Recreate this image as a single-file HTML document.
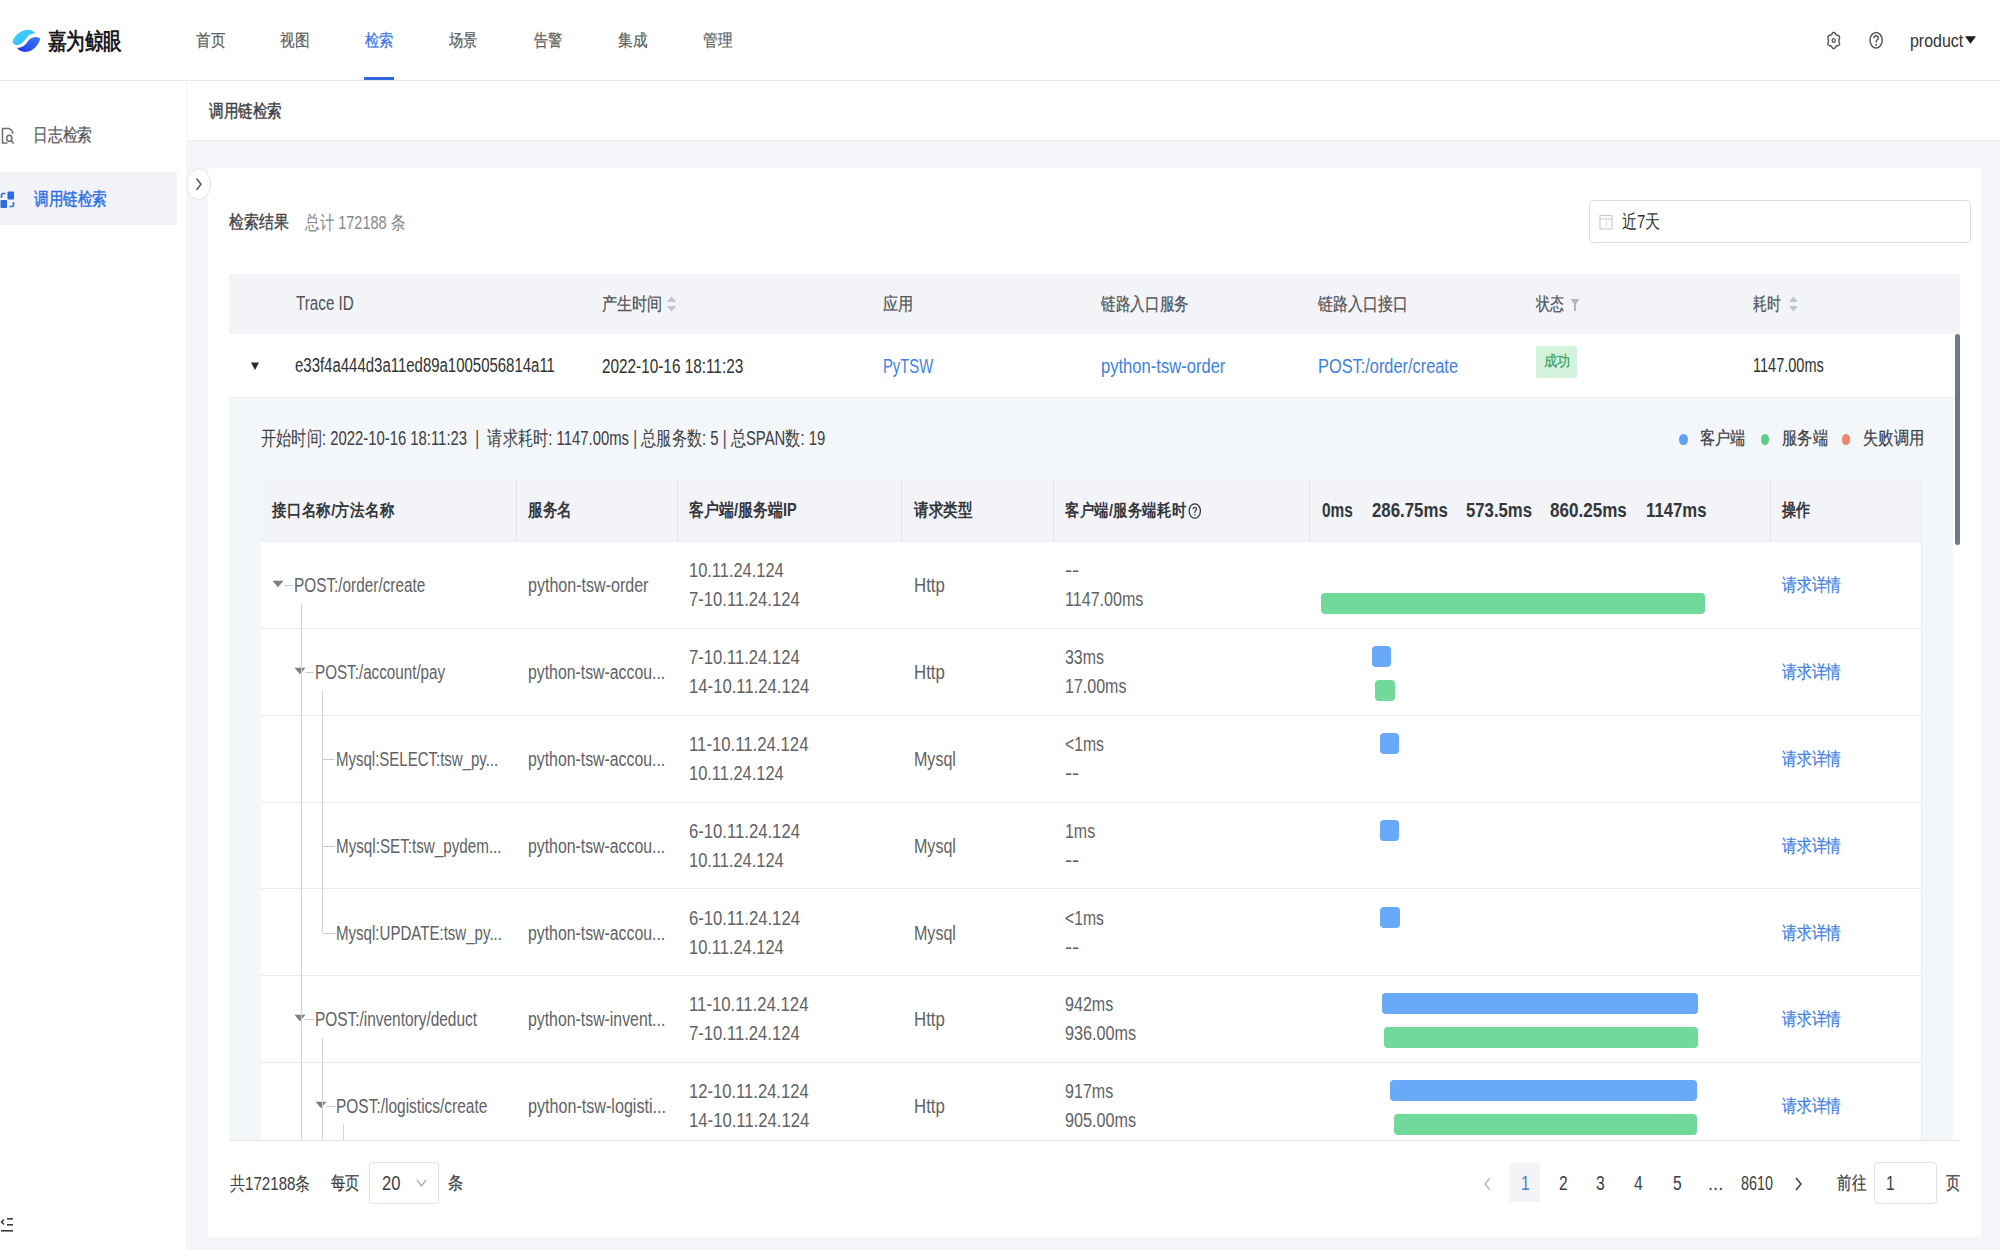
<!DOCTYPE html>
<html><head><meta charset="utf-8"><title>调用链检索</title>
<style>
html,body{margin:0;padding:0}
body{width:2000px;height:1250px;overflow:hidden;position:relative;font-family:"Liberation Sans",sans-serif;background:#f3f5f9}
.r{position:absolute}
.t{position:absolute;white-space:nowrap;transform-origin:0 50%;line-height:1}
</style></head><body>
<div class="r" style="left:0px;top:0px;width:2000px;height:1250px;background:#f3f5f9;"></div>
<div class="r" style="left:0px;top:0px;width:2000px;height:80px;background:#ffffff;"></div>
<div class="r" style="left:0px;top:80px;width:2000px;height:1px;background:#e7e9ed;"></div>
<svg class="r" style="left:10px;top:28px" width="32" height="26" viewBox="0 0 32 26">
<defs><linearGradient id="lgc" x1="0" y1="0" x2="1" y2="1"><stop offset="0" stop-color="#49d8f4"/><stop offset="1" stop-color="#30b2f9"/></linearGradient>
<linearGradient id="lgb" x1="1" y1="0" x2="0" y2="1"><stop offset="0" stop-color="#3c7ef3"/><stop offset="1" stop-color="#1f36f3"/></linearGradient></defs>
<path d="M2.4 14.2 C4 8 10 2 18 1.8 C21 1.8 23.5 3 25.5 5.5 C22 5.2 19.5 6.3 17.3 8.8 C15.3 11.8 13 15.3 8 17.2 C6 17.5 3.8 16 2.4 14.2 Z" fill="url(#lgc)"/>
<path d="M30.4 11 C28 18 22 24 15 24 C11.5 24 8.5 22 6.8 19.8 C12 20.2 15.2 17.3 17.2 14.3 C19.2 11.3 21 9.5 24.5 9.2 C26.5 8.5 28.8 9.5 30.4 11 Z" fill="url(#lgb)"/>
</svg>
<div class="t" style="left:48px;top:28.5px;font-size:24px;color:#1b1b1f;font-weight:700;transform:scale(0.7708,0.95);">嘉为鲸眼</div>
<div class="t" style="left:196.2px;top:30.8px;font-size:18px;color:#5c5f66;font-weight:400;transform:scale(0.8176,0.95);-webkit-text-stroke:0.25px currentColor;">首页</div>
<div class="t" style="left:280px;top:30.8px;font-size:18px;color:#5c5f66;font-weight:400;transform:scale(0.8176,0.95);-webkit-text-stroke:0.25px currentColor;">视图</div>
<div class="t" style="left:364.5px;top:30.8px;font-size:18px;color:#3c76e4;font-weight:400;transform:scale(0.7943,0.95);-webkit-text-stroke:0.25px currentColor;">检索</div>
<div class="t" style="left:449px;top:30.8px;font-size:18px;color:#5c5f66;font-weight:400;transform:scale(0.7943,0.95);-webkit-text-stroke:0.25px currentColor;">场景</div>
<div class="t" style="left:534px;top:30.8px;font-size:18px;color:#5c5f66;font-weight:400;transform:scale(0.7943,0.95);-webkit-text-stroke:0.25px currentColor;">告警</div>
<div class="t" style="left:618px;top:30.8px;font-size:18px;color:#5c5f66;font-weight:400;transform:scale(0.8176,0.95);-webkit-text-stroke:0.25px currentColor;">集成</div>
<div class="t" style="left:702.7px;top:30.8px;font-size:18px;color:#5c5f66;font-weight:400;transform:scale(0.8176,0.95);-webkit-text-stroke:0.25px currentColor;">管理</div>
<div class="r" style="left:364px;top:77px;width:30px;height:3px;background:#2f66dc;"></div>
<svg class="r" style="left:1827px;top:31px" width="14" height="19" viewBox="0 0 14 19">
<path d="M6.70 1.35 L7.04 1.40 L7.37 1.56 L7.68 1.80 L7.96 2.10 L8.21 2.45 L8.44 2.81 L8.65 3.15 L8.85 3.46 L9.06 3.72 L9.28 3.91 L9.53 4.06 L9.81 4.15 L10.12 4.22 L10.47 4.27 L10.83 4.34 L11.20 4.44 L11.55 4.59 L11.87 4.80 L12.14 5.08 L12.35 5.42 L12.48 5.82 L12.54 6.25 L12.53 6.70 L12.45 7.16 L12.34 7.61 L12.21 8.04 L12.07 8.44 L11.96 8.81 L11.89 9.16 L11.86 9.50 L11.89 9.84 L11.96 10.19 L12.07 10.56 L12.21 10.96 L12.34 11.39 L12.45 11.84 L12.53 12.30 L12.54 12.75 L12.48 13.18 L12.35 13.57 L12.14 13.92 L11.87 14.20 L11.55 14.41 L11.20 14.56 L10.83 14.66 L10.47 14.73 L10.12 14.78 L9.81 14.85 L9.53 14.94 L9.28 15.09 L9.06 15.28 L8.85 15.54 L8.65 15.85 L8.44 16.19 L8.21 16.55 L7.96 16.90 L7.68 17.20 L7.37 17.44 L7.04 17.60 L6.70 17.65 L6.36 17.60 L6.03 17.44 L5.72 17.20 L5.44 16.90 L5.19 16.55 L4.96 16.19 L4.75 15.85 L4.55 15.54 L4.34 15.28 L4.12 15.09 L3.87 14.94 L3.59 14.85 L3.28 14.78 L2.93 14.73 L2.57 14.66 L2.20 14.56 L1.85 14.41 L1.53 14.20 L1.26 13.92 L1.05 13.58 L0.92 13.18 L0.86 12.75 L0.87 12.30 L0.95 11.84 L1.06 11.39 L1.19 10.96 L1.33 10.56 L1.44 10.19 L1.51 9.84 L1.54 9.50 L1.51 9.16 L1.44 8.81 L1.33 8.44 L1.19 8.04 L1.06 7.61 L0.95 7.16 L0.87 6.70 L0.86 6.25 L0.92 5.82 L1.05 5.42 L1.26 5.08 L1.53 4.80 L1.85 4.59 L2.20 4.44 L2.57 4.34 L2.93 4.27 L3.28 4.22 L3.59 4.15 L3.87 4.06 L4.12 3.91 L4.34 3.72 L4.55 3.46 L4.75 3.15 L4.96 2.81 L5.19 2.45 L5.44 2.10 L5.72 1.80 L6.03 1.56 L6.36 1.40 L6.70 1.35 Z" fill="none" stroke="#55585e" stroke-width="1.5" stroke-linejoin="round"/>
<ellipse cx="6.7" cy="9.5" rx="1.5" ry="1.9" fill="none" stroke="#55585e" stroke-width="1.4"/></svg>
<svg class="r" style="left:1868px;top:30px" width="17" height="21" viewBox="0 0 17 21">
<ellipse cx="8.1" cy="10.3" rx="6.1" ry="7.8" fill="none" stroke="#55585e" stroke-width="1.5"/>
<path d="M6 8.3 C6 6.6 6.9 5.8 8.1 5.8 C9.3 5.8 10.2 6.6 10.2 7.9 C10.2 9.6 8.2 9.9 8.2 11.8 L8.2 12.6" fill="none" stroke="#55585e" stroke-width="1.5"/>
<rect x="7.4" y="13.9" width="1.6" height="1.8" fill="#55585e"/></svg>
<div class="t" style="left:1910px;top:30.8px;font-size:19px;color:#303236;font-weight:400;transform:scaleX(0.8387);">product</div>
<svg class="r" style="left:1964px;top:35px" width="13" height="10" viewBox="0 0 13 10"><path d="M1 1.2 L12 1.2 L6.5 8.8 Z" fill="#1d1d20"/></svg>
<div class="r" style="left:0px;top:81px;width:186px;height:1169px;background:#ffffff;"></div>
<div class="r" style="left:186px;top:81px;width:5px;height:1169px;background:linear-gradient(90deg,#f4f5f7,#f3f5f9);"></div>
<svg class="r" style="left:0px;top:126px" width="16" height="19" viewBox="0 0 16 19">
<path d="M9.5 2.5 L2.5 2.5 L2.5 17 L7.5 17" fill="none" stroke="#6a6d73" stroke-width="1.5"/>
<path d="M9.5 2.5 L12.5 5.5 L12.5 8" fill="none" stroke="#6a6d73" stroke-width="1.5"/>
<ellipse cx="9.3" cy="12.3" rx="2.6" ry="3.1" fill="none" stroke="#6a6d73" stroke-width="1.5"/>
<path d="M11.3 14.8 L13.6 17.6" stroke="#6a6d73" stroke-width="1.6"/></svg>
<div class="t" style="left:32.6px;top:125.5px;font-size:18.5px;color:#55585e;font-weight:400;transform:scale(0.7764,0.95);-webkit-text-stroke:0.25px currentColor;">日志检索</div>
<div class="r" style="left:0px;top:172px;width:177px;height:53px;background:#f1f3f7;"></div>
<svg class="r" style="left:0px;top:190px" width="16" height="19" viewBox="0 0 16 19">
<rect x="7.5" y="1.5" width="6.5" height="8" rx="1" fill="#2f6be6"/>
<rect x="0.5" y="10" width="6.5" height="8" rx="1" fill="#2f6be6"/>
<path d="M1.5 8 L1.5 5 C1.5 4 2 3.5 3 3.5 L5.5 3.5" fill="none" stroke="#2f6be6" stroke-width="1.6"/>
<path d="M13.5 12 L13.5 15 C13.5 16 13 16.5 12 16.5 L9.5 16.5" fill="none" stroke="#2f6be6" stroke-width="1.6"/></svg>
<div class="t" style="left:33.7px;top:190.0px;font-size:18.5px;color:#2d6de8;font-weight:500;transform:scale(0.7660,0.95);-webkit-text-stroke:0.45px currentColor;">调用链检索</div>
<svg class="r" style="left:0px;top:1215px" width="16" height="19" viewBox="0 0 16 19">
<path d="M4 4.5 L1.5 7 L4 9.5" fill="none" stroke="#3a3d42" stroke-width="1.5"/>
<rect x="7" y="3" width="6" height="1.6" fill="#3a3d42"/>
<rect x="7" y="9" width="6" height="1.6" fill="#3a3d42"/>
<rect x="1" y="15" width="12" height="1.6" fill="#3a3d42"/></svg>
<div class="r" style="left:187px;top:81px;width:1813px;height:59px;background:#ffffff;"></div>
<div class="r" style="left:187px;top:140px;width:1813px;height:1px;background:#eaebee;"></div>
<div class="t" style="left:208.5px;top:101.7px;font-size:18.5px;color:#3d4046;font-weight:500;transform:scale(0.7660,0.95);-webkit-text-stroke:0.45px currentColor;">调用链检索</div>
<div class="r" style="left:208px;top:168px;width:1773px;height:1069px;background:#ffffff;"></div>
<svg class="r" style="left:186px;top:168px" width="26" height="33" viewBox="0 0 26 33">
<ellipse cx="12.7" cy="16.2" rx="11.8" ry="15.4" fill="#fff" stroke="#e3e5ea" stroke-width="1"/>
<path d="M10.5 10.5 L15 16.2 L10.5 22" fill="none" stroke="#5d6066" stroke-width="1.6"/></svg>
<div class="t" style="left:229px;top:212.8px;font-size:18.5px;color:#45484d;font-weight:400;transform:scale(0.7827,0.95);-webkit-text-stroke:0.45px currentColor;">检索结果</div>
<div class="t" style="left:304.5px;top:212.5px;font-size:19px;color:#85888e;font-weight:400;transform:scaleX(0.7654);">总计 172188 条</div>
<div class="r" style="left:1589px;top:200px;width:382px;height:43px;background:#ffffff;box-sizing:border-box;border:1px solid #d9dce2;border-radius:4px;"></div>
<svg class="r" style="left:1599px;top:214px" width="14" height="16" viewBox="0 0 14 16">
<rect x="1" y="1.5" width="12" height="13.5" fill="none" stroke="#c3c6cc" stroke-width="1"/>
<path d="M1 5 L13 5" stroke="#c3c6cc" stroke-width="1"/>
<path d="M6 8 L8 8 L7 12" fill="none" stroke="#d3d6dc" stroke-width="0.8"/></svg>
<div class="t" style="left:1622px;top:212.1px;font-size:19px;color:#2f3236;font-weight:400;transform:scaleX(0.7872);">近7天</div>
<div class="r" style="left:229px;top:274px;width:1731px;height:60px;background:#f2f4f8;"></div>
<div class="t" style="left:296px;top:294.2px;font-size:19.5px;color:#505359;font-weight:400;transform:scaleX(0.7808);">Trace ID</div>
<div class="t" style="left:601.8px;top:295.4px;font-size:18.5px;color:#505359;font-weight:400;transform:scale(0.7973,0.95);-webkit-text-stroke:0.25px currentColor;">产生时间</div>
<svg class="r" style="left:666px;top:296px" width="11" height="16" viewBox="0 0 11 16"><path d="M5.5 0.5 L10 6 L1 6 Z" fill="#c0c3ca"/><path d="M5.5 15.5 L10 10 L1 10 Z" fill="#c0c3ca"/></svg>
<div class="t" style="left:883px;top:295.4px;font-size:18.5px;color:#505359;font-weight:400;transform:scale(0.8000,0.95);-webkit-text-stroke:0.25px currentColor;">应用</div>
<div class="t" style="left:1101px;top:295.4px;font-size:18.5px;color:#505359;font-weight:400;transform:scale(0.7699,0.95);-webkit-text-stroke:0.25px currentColor;">链路入口服务</div>
<div class="t" style="left:1317.6px;top:295.4px;font-size:18.5px;color:#505359;font-weight:400;transform:scale(0.7874,0.95);-webkit-text-stroke:0.25px currentColor;">链路入口接口</div>
<div class="t" style="left:1535.8px;top:295.4px;font-size:18.5px;color:#505359;font-weight:400;transform:scale(0.7351,0.95);-webkit-text-stroke:0.25px currentColor;">状态</div>
<svg class="r" style="left:1570px;top:298px" width="10" height="14" viewBox="0 0 10 14"><path d="M0.5 1 L9.5 1 L6 6 L6 13 L4 13 L4 6 Z" fill="#b4b7be"/></svg>
<div class="t" style="left:1753px;top:295.4px;font-size:18.5px;color:#505359;font-weight:400;transform:scale(0.7289,0.95);-webkit-text-stroke:0.25px currentColor;">耗时</div>
<svg class="r" style="left:1788px;top:296px" width="11" height="16" viewBox="0 0 11 16"><path d="M5.5 0.5 L10 6 L1 6 Z" fill="#c0c3ca"/><path d="M5.5 15.5 L10 10 L1 10 Z" fill="#c0c3ca"/></svg>
<div class="r" style="left:229px;top:334px;width:1726px;height:63px;background:#ffffff;"></div>
<div class="r" style="left:229px;top:397px;width:1726px;height:1px;background:#ebebeb;"></div>
<svg class="r" style="left:250px;top:361px" width="10" height="10" viewBox="0 0 10 10"><path d="M1 1.5 L9 1.5 L5 9 Z" fill="#2b2d31"/></svg>
<div class="t" style="left:295.2px;top:355.9px;font-size:19.5px;color:#2f3236;font-weight:400;transform:scaleX(0.7674);">e33f4a444d3a11ed89a1005056814a11</div>
<div class="t" style="left:602px;top:355.7px;font-size:20px;color:#2f3236;font-weight:400;transform:scaleX(0.7665);">2022-10-16 18:11:23</div>
<div class="t" style="left:883px;top:355.7px;font-size:20px;color:#3f7fe6;font-weight:400;transform:scaleX(0.7394);">PyTSW</div>
<div class="t" style="left:1101px;top:355.7px;font-size:20px;color:#3f7fe6;font-weight:400;transform:scaleX(0.8289);">python-tsw-order</div>
<div class="t" style="left:1317.6px;top:355.7px;font-size:20px;color:#3f7fe6;font-weight:400;transform:scaleX(0.8179);">POST:/order/create</div>
<div class="r" style="left:1536px;top:346px;width:41px;height:32px;background:#d3f3dc;border-radius:2px;"></div>
<div class="t" style="left:1544px;top:353.2px;font-size:16px;color:#3a9f5a;font-weight:400;transform:scale(0.8333,0.95);-webkit-text-stroke:0.25px currentColor;">成功</div>
<div class="t" style="left:1753.2px;top:356.0px;font-size:19.4px;color:#2f3236;font-weight:400;transform:scaleX(0.7484);">1147.00ms</div>
<div class="r" style="left:229px;top:398px;width:1724px;height:743px;background:#f4f7fa;"></div>
<div class="r" style="left:1955px;top:334px;width:5px;height:211px;background:#6a7a8c;border-radius:3px;"></div>
<div class="t" style="left:261px;top:428.6px;font-size:19.5px;color:#3d4046;font-weight:400;transform:scaleX(0.7618);">开始时间: 2022-10-16 18:11:23 &nbsp;|&nbsp; 请求耗时: 1147.00ms | 总服务数: 5 | 总SPAN数: 19</div>
<div class="r" style="left:1679px;top:433.5px;width:8.5px;height:11px;border-radius:50%;background:#5fa2f5"></div>
<div class="t" style="left:1700px;top:429.1px;font-size:18.5px;color:#3d4046;font-weight:400;transform:scale(0.8000,0.95);-webkit-text-stroke:0.25px currentColor;">客户端</div>
<div class="r" style="left:1761px;top:433.5px;width:7.5px;height:11px;border-radius:50%;background:#5bd08a"></div>
<div class="t" style="left:1781.6px;top:429.1px;font-size:18.5px;color:#3d4046;font-weight:400;transform:scale(0.8036,0.95);-webkit-text-stroke:0.25px currentColor;">服务端</div>
<div class="r" style="left:1842px;top:433.5px;width:7.5px;height:11px;border-radius:50%;background:#f0846d"></div>
<div class="t" style="left:1863px;top:429.1px;font-size:18.5px;color:#3d4046;font-weight:400;transform:scale(0.8055,0.95);-webkit-text-stroke:0.25px currentColor;">失败调用</div>
<div class="r" style="left:261px;top:479px;width:1661px;height:662px;background:#ffffff;"></div>
<div class="r" style="left:261px;top:479px;width:1661px;height:62px;background:#f2f4f8;"></div>
<div class="r" style="left:261px;top:541px;width:1661px;height:1px;background:#ebebef;"></div>
<div class="r" style="left:516px;top:479px;width:1px;height:62px;background:#e3e5e9;"></div>
<div class="r" style="left:677px;top:479px;width:1px;height:62px;background:#e3e5e9;"></div>
<div class="r" style="left:901px;top:479px;width:1px;height:62px;background:#e3e5e9;"></div>
<div class="r" style="left:1053px;top:479px;width:1px;height:62px;background:#e3e5e9;"></div>
<div class="r" style="left:1309px;top:479px;width:1px;height:62px;background:#e3e5e9;"></div>
<div class="r" style="left:1770px;top:479px;width:1px;height:62px;background:#e3e5e9;"></div>
<div class="r" style="left:1921px;top:479px;width:1px;height:662px;background:#e9ebef;"></div>
<div class="t" style="left:272px;top:501.1px;font-size:18.5px;color:#34373c;font-weight:700;transform:scale(0.7796,0.92);">接口名称/方法名称</div>
<div class="t" style="left:527.9px;top:501.1px;font-size:18.5px;color:#34373c;font-weight:700;transform:scale(0.7704,0.95);">服务名</div>
<div class="t" style="left:688.8px;top:501.1px;font-size:18.5px;color:#34373c;font-weight:700;transform:scale(0.7882,0.95);">客户端/服务端IP</div>
<div class="t" style="left:913.6px;top:501.1px;font-size:18.5px;color:#34373c;font-weight:700;transform:scale(0.7684,0.95);">请求类型</div>
<div class="t" style="left:1064.8px;top:501.1px;font-size:18.5px;color:#34373c;font-weight:700;transform:scale(0.7720,0.92);">客户端/服务端耗时</div>
<svg class="r" style="left:1188px;top:502px" width="14" height="18" viewBox="0 0 14 18"><ellipse cx="6.8" cy="9" rx="5.6" ry="7.2" fill="none" stroke="#34373c" stroke-width="1.3"/><path d="M5 7.3 C5 6 5.8 5.3 6.8 5.3 C7.8 5.3 8.6 6 8.6 7 C8.6 8.3 6.9 8.6 6.9 10.2 L6.9 10.9" fill="none" stroke="#34373c" stroke-width="1.2"/><rect x="6.3" y="12" width="1.2" height="1.4" fill="#34373c"/></svg>
<div class="t" style="left:1321.8px;top:500.6px;font-size:19.5px;color:#34373c;font-weight:700;transform:scaleX(0.7895);">0ms</div>
<div class="t" style="left:1372px;top:500.6px;font-size:19.5px;color:#34373c;font-weight:700;transform:scaleX(0.8628);">286.75ms</div>
<div class="t" style="left:1465.8px;top:500.6px;font-size:19.5px;color:#34373c;font-weight:700;transform:scaleX(0.8579);">573.5ms</div>
<div class="t" style="left:1550.2px;top:500.6px;font-size:19.5px;color:#34373c;font-weight:700;transform:scaleX(0.8744);">860.25ms</div>
<div class="t" style="left:1645.6px;top:500.6px;font-size:19.5px;color:#34373c;font-weight:700;transform:scaleX(0.8580);">1147ms</div>
<div class="t" style="left:1781.6px;top:501.1px;font-size:18.5px;color:#34373c;font-weight:700;transform:scale(0.7421,0.95);">操作</div>
<div class="r" style="left:261px;top:628px;width:1660px;height:1px;background:#ebebeb;"></div>
<svg class="r" style="left:272.3px;top:579.5px" width="12" height="8" viewBox="0 0 12 8"><path d="M0.5 0.8 L11.5 0.8 L6 7.2 Z" fill="#7b7e84"/></svg>
<div class="r" style="left:283.8px;top:585.0px;width:9.0px;height:1px;background:#c9cacd"></div>
<div class="t" style="left:293.8px;top:575.8px;font-size:19.5px;color:#5f6268;font-weight:400;transform:scaleX(0.7867);">POST:/order/create</div>
<div class="t" style="left:527.6px;top:575.8px;font-size:19.5px;color:#5f6268;font-weight:400;transform:scaleX(0.8234);">python-tsw-order</div>
<div class="t" style="left:689.3px;top:560.6px;font-size:19.5px;color:#5f6268;font-weight:400;transform:scaleX(0.8423);">10.11.24.124</div>
<div class="t" style="left:689.3px;top:590.2px;font-size:19.5px;color:#5f6268;font-weight:400;transform:scaleX(0.8527);">7-10.11.24.124</div>
<div class="t" style="left:913.8px;top:575.8px;font-size:19.5px;color:#5f6268;font-weight:400;transform:scaleX(0.8618);">Http</div>
<div class="t" style="left:1065px;top:560.6px;font-size:19.5px;color:#5f6268;font-weight:400;transform:scaleX(1.0909);">--</div>
<div class="t" style="left:1065px;top:590.2px;font-size:19.5px;color:#5f6268;font-weight:400;transform:scaleX(0.8245);">1147.00ms</div>
<div class="r" style="left:1321px;top:593px;width:384px;height:21px;background:#71d99a;border-radius:4px;"></div>
<div class="t" style="left:1781.6px;top:576.2px;font-size:18.5px;color:#3f7fe6;font-weight:400;transform:scale(0.7787,0.95);-webkit-text-stroke:0.25px currentColor;">请求详情</div>
<div class="r" style="left:261px;top:715px;width:1660px;height:1px;background:#ebebeb;"></div>
<svg class="r" style="left:293.5px;top:666.5px" width="12" height="8" viewBox="0 0 12 8"><path d="M0.5 0.8 L11.5 0.8 L6 7.2 Z" fill="#7b7e84"/></svg>
<div class="r" style="left:305px;top:672.0px;width:9px;height:1px;background:#c9cacd"></div>
<div class="t" style="left:315px;top:662.8px;font-size:19.5px;color:#5f6268;font-weight:400;transform:scaleX(0.7795);">POST:/account/pay</div>
<div class="t" style="left:527.6px;top:662.8px;font-size:19.5px;color:#5f6268;font-weight:400;transform:scaleX(0.8114);">python-tsw-accou...</div>
<div class="t" style="left:689.3px;top:647.6px;font-size:19.5px;color:#5f6268;font-weight:400;transform:scaleX(0.8527);">7-10.11.24.124</div>
<div class="t" style="left:689.3px;top:677.2px;font-size:19.5px;color:#5f6268;font-weight:400;transform:scaleX(0.8561);">14-10.11.24.124</div>
<div class="t" style="left:913.8px;top:662.8px;font-size:19.5px;color:#5f6268;font-weight:400;transform:scaleX(0.8618);">Http</div>
<div class="t" style="left:1065px;top:647.6px;font-size:19.5px;color:#5f6268;font-weight:400;transform:scaleX(0.8174);">33ms</div>
<div class="t" style="left:1065px;top:677.2px;font-size:19.5px;color:#5f6268;font-weight:400;transform:scaleX(0.8219);">17.00ms</div>
<div class="r" style="left:1371.6px;top:646px;width:19.0px;height:21px;background:#68a9f8;border-radius:4px;"></div>
<div class="r" style="left:1374.8px;top:680px;width:19.90000000000009px;height:21px;background:#71d99a;border-radius:4px;"></div>
<div class="t" style="left:1781.6px;top:663.2px;font-size:18.5px;color:#3f7fe6;font-weight:400;transform:scale(0.7787,0.95);-webkit-text-stroke:0.25px currentColor;">请求详情</div>
<div class="r" style="left:261px;top:802px;width:1660px;height:1px;background:#ebebeb;"></div>
<div class="r" style="left:323px;top:759.0px;width:12px;height:1px;background:#c9cacd"></div>
<div class="t" style="left:336px;top:749.8px;font-size:19.5px;color:#5f6268;font-weight:400;transform:scaleX(0.7692);">Mysql:SELECT:tsw_py...</div>
<div class="t" style="left:527.6px;top:749.8px;font-size:19.5px;color:#5f6268;font-weight:400;transform:scaleX(0.8114);">python-tsw-accou...</div>
<div class="t" style="left:689.3px;top:734.6px;font-size:19.5px;color:#5f6268;font-weight:400;transform:scaleX(0.8587);">11-10.11.24.124</div>
<div class="t" style="left:689.3px;top:764.2px;font-size:19.5px;color:#5f6268;font-weight:400;transform:scaleX(0.8423);">10.11.24.124</div>
<div class="t" style="left:913.8px;top:749.8px;font-size:19.5px;color:#5f6268;font-weight:400;transform:scaleX(0.8224);">Mysql</div>
<div class="t" style="left:1065px;top:734.6px;font-size:19.5px;color:#5f6268;font-weight:400;transform:scaleX(0.8085);">&lt;1ms</div>
<div class="t" style="left:1065px;top:764.2px;font-size:19.5px;color:#5f6268;font-weight:400;transform:scaleX(1.0909);">--</div>
<div class="r" style="left:1379.7px;top:733px;width:19.09999999999991px;height:21px;background:#68a9f8;border-radius:4px;"></div>
<div class="t" style="left:1781.6px;top:750.2px;font-size:18.5px;color:#3f7fe6;font-weight:400;transform:scale(0.7787,0.95);-webkit-text-stroke:0.25px currentColor;">请求详情</div>
<div class="r" style="left:261px;top:888px;width:1660px;height:1px;background:#ebebeb;"></div>
<div class="r" style="left:323px;top:846.0px;width:12px;height:1px;background:#c9cacd"></div>
<div class="t" style="left:336px;top:836.8px;font-size:19.5px;color:#5f6268;font-weight:400;transform:scaleX(0.7795);">Mysql:SET:tsw_pydem...</div>
<div class="t" style="left:527.6px;top:836.8px;font-size:19.5px;color:#5f6268;font-weight:400;transform:scaleX(0.8114);">python-tsw-accou...</div>
<div class="t" style="left:689.3px;top:821.6px;font-size:19.5px;color:#5f6268;font-weight:400;transform:scaleX(0.8550);">6-10.11.24.124</div>
<div class="t" style="left:689.3px;top:851.2px;font-size:19.5px;color:#5f6268;font-weight:400;transform:scaleX(0.8423);">10.11.24.124</div>
<div class="t" style="left:913.8px;top:836.8px;font-size:19.5px;color:#5f6268;font-weight:400;transform:scaleX(0.8224);">Mysql</div>
<div class="t" style="left:1065px;top:821.6px;font-size:19.5px;color:#5f6268;font-weight:400;transform:scaleX(0.8171);">1ms</div>
<div class="t" style="left:1065px;top:851.2px;font-size:19.5px;color:#5f6268;font-weight:400;transform:scaleX(1.0909);">--</div>
<div class="r" style="left:1379.7px;top:820px;width:19.09999999999991px;height:21px;background:#68a9f8;border-radius:4px;"></div>
<div class="t" style="left:1781.6px;top:837.2px;font-size:18.5px;color:#3f7fe6;font-weight:400;transform:scale(0.7787,0.95);-webkit-text-stroke:0.25px currentColor;">请求详情</div>
<div class="r" style="left:261px;top:975px;width:1660px;height:1px;background:#ebebeb;"></div>
<div class="r" style="left:323px;top:933.0px;width:12px;height:1px;background:#c9cacd"></div>
<div class="t" style="left:336px;top:923.8px;font-size:19.5px;color:#5f6268;font-weight:400;transform:scaleX(0.7722);">Mysql:UPDATE:tsw_py...</div>
<div class="t" style="left:527.6px;top:923.8px;font-size:19.5px;color:#5f6268;font-weight:400;transform:scaleX(0.8114);">python-tsw-accou...</div>
<div class="t" style="left:689.3px;top:908.6px;font-size:19.5px;color:#5f6268;font-weight:400;transform:scaleX(0.8550);">6-10.11.24.124</div>
<div class="t" style="left:689.3px;top:938.2px;font-size:19.5px;color:#5f6268;font-weight:400;transform:scaleX(0.8423);">10.11.24.124</div>
<div class="t" style="left:913.8px;top:923.8px;font-size:19.5px;color:#5f6268;font-weight:400;transform:scaleX(0.8224);">Mysql</div>
<div class="t" style="left:1065px;top:908.6px;font-size:19.5px;color:#5f6268;font-weight:400;transform:scaleX(0.8085);">&lt;1ms</div>
<div class="t" style="left:1065px;top:938.2px;font-size:19.5px;color:#5f6268;font-weight:400;transform:scaleX(1.0909);">--</div>
<div class="r" style="left:1379.7px;top:907px;width:20.200000000000045px;height:21px;background:#68a9f8;border-radius:4px;"></div>
<div class="t" style="left:1781.6px;top:924.2px;font-size:18.5px;color:#3f7fe6;font-weight:400;transform:scale(0.7787,0.95);-webkit-text-stroke:0.25px currentColor;">请求详情</div>
<div class="r" style="left:261px;top:1062px;width:1660px;height:1px;background:#ebebeb;"></div>
<svg class="r" style="left:293.5px;top:1013.5px" width="12" height="8" viewBox="0 0 12 8"><path d="M0.5 0.8 L11.5 0.8 L6 7.2 Z" fill="#7b7e84"/></svg>
<div class="r" style="left:305px;top:1019.0px;width:9px;height:1px;background:#c9cacd"></div>
<div class="t" style="left:315px;top:1009.8px;font-size:19.5px;color:#5f6268;font-weight:400;transform:scaleX(0.7907);">POST:/inventory/deduct</div>
<div class="t" style="left:527.6px;top:1009.8px;font-size:19.5px;color:#5f6268;font-weight:400;transform:scaleX(0.8120);">python-tsw-invent...</div>
<div class="t" style="left:689.3px;top:994.6px;font-size:19.5px;color:#5f6268;font-weight:400;transform:scaleX(0.8587);">11-10.11.24.124</div>
<div class="t" style="left:689.3px;top:1024.2px;font-size:19.5px;color:#5f6268;font-weight:400;transform:scaleX(0.8527);">7-10.11.24.124</div>
<div class="t" style="left:913.8px;top:1009.8px;font-size:19.5px;color:#5f6268;font-weight:400;transform:scaleX(0.8618);">Http</div>
<div class="t" style="left:1065px;top:994.6px;font-size:19.5px;color:#5f6268;font-weight:400;transform:scaleX(0.8246);">942ms</div>
<div class="t" style="left:1065px;top:1024.2px;font-size:19.5px;color:#5f6268;font-weight:400;transform:scaleX(0.8310);">936.00ms</div>
<div class="r" style="left:1382.2px;top:993px;width:315.5999999999999px;height:21px;background:#68a9f8;border-radius:4px;"></div>
<div class="r" style="left:1384px;top:1027px;width:313.79999999999995px;height:21px;background:#71d99a;border-radius:4px;"></div>
<div class="t" style="left:1781.6px;top:1010.2px;font-size:18.5px;color:#3f7fe6;font-weight:400;transform:scale(0.7787,0.95);-webkit-text-stroke:0.25px currentColor;">请求详情</div>
<svg class="r" style="left:314.5px;top:1100.5px" width="12" height="8" viewBox="0 0 12 8"><path d="M0.5 0.8 L11.5 0.8 L6 7.2 Z" fill="#7b7e84"/></svg>
<div class="r" style="left:326px;top:1106.0px;width:9px;height:1px;background:#c9cacd"></div>
<div class="t" style="left:336px;top:1096.8px;font-size:19.5px;color:#5f6268;font-weight:400;transform:scaleX(0.7937);">POST:/logistics/create</div>
<div class="t" style="left:527.6px;top:1096.8px;font-size:19.5px;color:#5f6268;font-weight:400;transform:scaleX(0.8268);">python-tsw-logisti...</div>
<div class="t" style="left:689.3px;top:1081.7px;font-size:19.5px;color:#5f6268;font-weight:400;transform:scaleX(0.8511);">12-10.11.24.124</div>
<div class="t" style="left:689.3px;top:1111.2px;font-size:19.5px;color:#5f6268;font-weight:400;transform:scaleX(0.8561);">14-10.11.24.124</div>
<div class="t" style="left:913.8px;top:1096.8px;font-size:19.5px;color:#5f6268;font-weight:400;transform:scaleX(0.8618);">Http</div>
<div class="t" style="left:1065px;top:1081.7px;font-size:19.5px;color:#5f6268;font-weight:400;transform:scaleX(0.8246);">917ms</div>
<div class="t" style="left:1065px;top:1111.2px;font-size:19.5px;color:#5f6268;font-weight:400;transform:scaleX(0.8310);">905.00ms</div>
<div class="r" style="left:1389.6px;top:1080px;width:307.20000000000005px;height:21px;background:#68a9f8;border-radius:4px;"></div>
<div class="r" style="left:1393.8px;top:1114px;width:303.0px;height:21px;background:#71d99a;border-radius:4px;"></div>
<div class="t" style="left:1781.6px;top:1097.2px;font-size:18.5px;color:#3f7fe6;font-weight:400;transform:scale(0.7787,0.95);-webkit-text-stroke:0.25px currentColor;">请求详情</div>
<div class="r" style="left:301px;top:604px;width:1px;height:537px;background:#d2d3d6"></div>
<div class="r" style="left:322px;top:690px;width:1px;height:243px;background:#d2d3d6"></div>
<div class="r" style="left:322px;top:1038px;width:1px;height:103px;background:#d2d3d6"></div>
<div class="r" style="left:343px;top:1124px;width:1px;height:17px;background:#d2d3d6"></div>
<div class="r" style="left:230px;top:1140px;width:1730px;height:1px;background:#e4e6ea;"></div>
<div class="t" style="left:229.6px;top:1174.0px;font-size:19px;color:#3d4046;font-weight:400;transform:scaleX(0.7940);">共172188条</div>
<div class="t" style="left:331px;top:1174.2px;font-size:18.5px;color:#3d4046;font-weight:400;transform:scale(0.7568,0.95);-webkit-text-stroke:0.25px currentColor;">每页</div>
<div class="r" style="left:369px;top:1162px;width:70px;height:42px;background:#fff;box-sizing:border-box;border:1px solid #dcdfe5;border-radius:4px;"></div>
<div class="t" style="left:382.4px;top:1173.8px;font-size:19.5px;color:#3d4046;font-weight:400;transform:scaleX(0.8500);">20</div>
<svg class="r" style="left:416px;top:1178px" width="11" height="10" viewBox="0 0 11 10"><path d="M1 2 L5.5 8 L10 2" fill="none" stroke="#a8abb2" stroke-width="1.3"/></svg>
<div class="t" style="left:448px;top:1174.2px;font-size:18.5px;color:#3d4046;font-weight:400;transform:scale(0.8000,0.95);-webkit-text-stroke:0.25px currentColor;">条</div>
<svg class="r" style="left:1482px;top:1176px" width="11" height="16" viewBox="0 0 11 16"><path d="M8 2 L3 8 L8 14" fill="none" stroke="#b8bbc1" stroke-width="1.5"/></svg>
<div class="r" style="left:1509px;top:1163px;width:31px;height:39px;background:#f3f4f7;border-radius:2px;"></div>
<div class="t" style="left:1521px;top:1173.8px;font-size:19.5px;color:#3f7fe6;font-weight:400;transform:scaleX(0.8000);">1</div>
<div class="t" style="left:1558.6px;top:1173.8px;font-size:19.5px;color:#3d4046;font-weight:400;transform:scaleX(0.8000);">2</div>
<div class="t" style="left:1596.4px;top:1173.8px;font-size:19.5px;color:#3d4046;font-weight:400;transform:scaleX(0.8000);">3</div>
<div class="t" style="left:1634px;top:1173.8px;font-size:19.5px;color:#3d4046;font-weight:400;transform:scaleX(0.8000);">4</div>
<div class="t" style="left:1672.5px;top:1173.8px;font-size:19.5px;color:#3d4046;font-weight:400;transform:scaleX(0.8000);">5</div>
<div class="t" style="left:1708.4px;top:1173.8px;font-size:19.5px;color:#3d4046;font-weight:400;transform:scaleX(0.9385);">...</div>
<div class="t" style="left:1741px;top:1173.8px;font-size:19.5px;color:#3d4046;font-weight:400;transform:scaleX(0.7381);">8610</div>
<svg class="r" style="left:1793px;top:1176px" width="11" height="16" viewBox="0 0 11 16"><path d="M3 2 L8 8 L3 14" fill="none" stroke="#3d4046" stroke-width="1.5"/></svg>
<div class="t" style="left:1836.6px;top:1174.2px;font-size:18.5px;color:#3d4046;font-weight:400;transform:scale(0.7676,0.95);-webkit-text-stroke:0.25px currentColor;">前往</div>
<div class="r" style="left:1874px;top:1162px;width:63px;height:42px;background:#fff;box-sizing:border-box;border:1px solid #dcdfe5;border-radius:4px;"></div>
<div class="t" style="left:1886px;top:1173.8px;font-size:19.5px;color:#3d4046;font-weight:400;transform:scaleX(0.8000);">1</div>
<div class="t" style="left:1946px;top:1174.2px;font-size:18.5px;color:#3d4046;font-weight:400;transform:scale(0.7500,0.95);-webkit-text-stroke:0.25px currentColor;">页</div>
</body></html>
